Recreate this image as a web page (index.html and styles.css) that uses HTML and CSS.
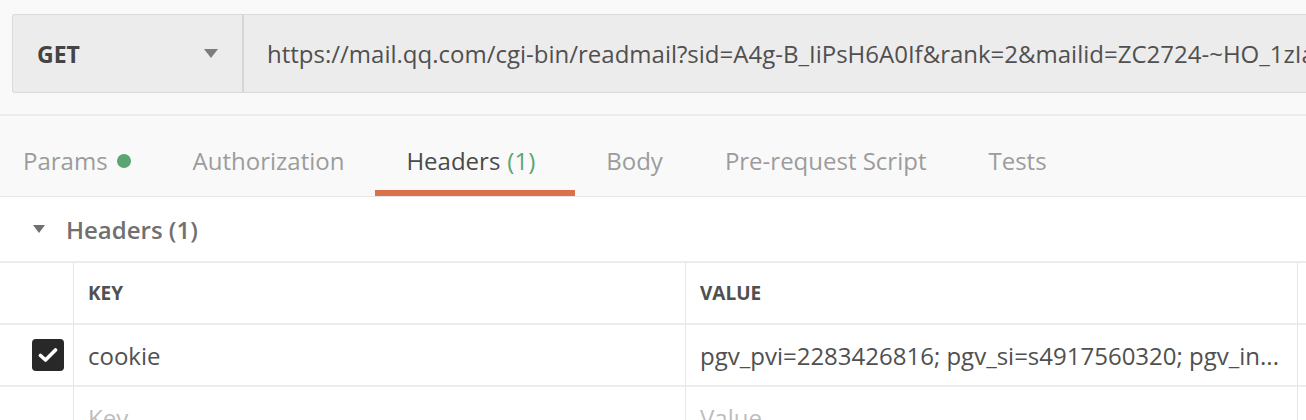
FILE: index.html
```html
<!DOCTYPE html>
<html lang="en">
<head>
    <meta charset="UTF-8">
    <title>Request</title>
    <link rel="stylesheet" href="styles.css">
</head>
<body>
    <div class="top">
        <div class="request-bar">
            <div class="method">
                <span>GET</span>
                <span class="caret"></span>
            </div>
            <div class="url">https://mail.qq.com/cgi-bin/readmail?sid=A4g-B_IiPsH6A0If&amp;rank=2&amp;mailid=ZC2724-~HO_1zIa4bS2xq~rVbk3Nk88</div>
        </div>
    </div>

    <nav class="tabs">
        <div class="tab first">Params <span class="dot"></span></div>
        <div class="tab">Authorization</div>
        <div class="tab active">Headers <span class="count">(1)</span></div>
        <div class="tab">Body</div>
        <div class="tab">Pre-request Script</div>
        <div class="tab">Tests</div>
    </nav>

    <div class="section-title">
        <span class="toggle"></span>
        Headers (1)
    </div>

    <div class="kv-table">
        <div class="cell check-cell"></div>
        <div class="cell head">KEY</div>
        <div class="cell head">VALUE</div>
        <div class="cell"></div>

        <div class="cell check-cell"><span class="checkbox">
            <svg width="20" height="16" viewBox="0 0 20 16"><path d="M2.5 8.5 L7.5 13 L17.5 3" fill="none" stroke="#fff" stroke-width="3.6" stroke-linecap="round" stroke-linejoin="round"/></svg>
        </span></div>
        <div class="cell">cookie</div>
        <div class="cell">pgv_pvi=2283426816; pgv_si=s4917560320; pgv_in...</div>
        <div class="cell"></div>

        <div class="cell check-cell"></div>
        <div class="cell placeholder">Key</div>
        <div class="cell placeholder">Value</div>
        <div class="cell"></div>
    </div>
</body>
</html>
```

FILE: styles.css
```css
body {
    margin: 0;
    font-family: "Open Sans", "Liberation Sans", sans-serif;
    background-color: #fff;
    color: #505050;
    overflow: hidden;
}
.top {
    background-color: #f9f9f9;
    padding: 14px 0 21px 12px;
    border-bottom: 2px solid #ececec;
}
.request-bar {
    display: flex;
    height: 79px;
    box-sizing: border-box;
    border: 1px solid #dadada;
    border-right: none;
    border-radius: 3px 0 0 3px;
    background-color: #ececec;
}
.method {
    width: 181px;
    padding: 0 24px;
    display: flex;
    align-items: center;
    justify-content: space-between;
    border-right: 2px solid #d6d6d6;
    font-size: 23px;
    font-weight: 700;
    color: #444;
}
.caret {
    width: 0;
    height: 0;
    border-left: 7px solid transparent;
    border-right: 7px solid transparent;
    border-top: 9px solid #7d7d7d;
}
.url {
    flex: 1;
    display: flex;
    align-items: center;
    padding-left: 23px;
    white-space: nowrap;
    overflow: hidden;
    font-size: 24px;
    color: #505050;
}
.tabs {
    display: flex;
    background-color: #f9f9f9;
    border-bottom: 1px solid #e6e6e6;
}
.tab {
    height: 80px;
    box-sizing: border-box;
    padding: 15px 31px 0;
    border-bottom: 6px solid transparent;
    display: flex;
    align-items: center;
    font-size: 24px;
    color: #9c9c9c;
    white-space: nowrap;
}
.tab.first {
    padding-left: 23px;
}
.tab.active {
    color: #4a4a4a;
    padding-right: 40px;
    border-bottom-color: #d9714b;
}
.count {
    color: #5aa574;
    margin-left: 7px;
}
.dot {
    display: inline-block;
    width: 14px;
    height: 14px;
    border-radius: 50%;
    background-color: #5aa574;
    margin-left: 9px;
}
.section-title {
    height: 64px;
    display: flex;
    align-items: center;
    padding-left: 33px;
    font-size: 24px;
    font-weight: 600;
    color: #707070;
    border-bottom: 2px solid #ececec;
}
.toggle {
    width: 0;
    height: 0;
    border-left: 6px solid transparent;
    border-right: 6px solid transparent;
    border-top: 8px solid #707070;
    margin-right: 21px;
}
.kv-table {
    display: grid;
    grid-template-columns: 73px 612px 612px 1fr;
}
.cell {
    height: 60px;
    display: flex;
    align-items: center;
    padding-left: 14px;
    border-left: 1px solid #e6e6e6;
    border-bottom: 2px solid #ececec;
    font-size: 24px;
    color: #505050;
    white-space: nowrap;
    overflow: hidden;
}
.check-cell {
    border-left: none;
    padding-left: 0;
    justify-content: flex-end;
    padding-right: 9px;
}
.head {
    font-size: 19px;
    font-weight: 700;
    color: #505050;
}
.placeholder {
    color: #bdbdbd;
}
.checkbox {
    width: 32px;
    height: 32px;
    border-radius: 4px;
    background-color: #282828;
    display: flex;
    align-items: center;
    justify-content: center;
}
```
